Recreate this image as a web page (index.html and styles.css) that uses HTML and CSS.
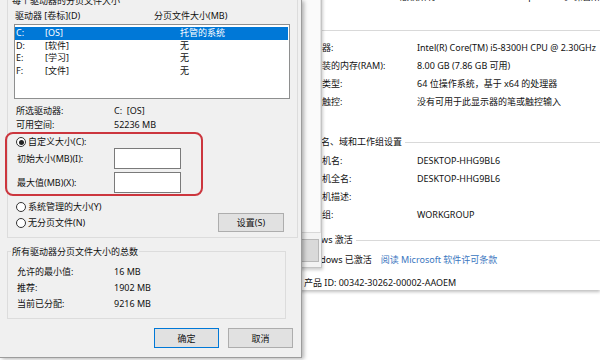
FILE: index.html
```html
<!DOCTYPE html>
<html lang="zh-CN">
<head>
    <meta charset="UTF-8">
    <title>虚拟内存</title>
    <link rel="stylesheet" href="styles.css">
</head>
<body>
<div class="desk">

    <!-- system info window (back) -->
    <div class="syswin">
        <div class="sys-cut">版权所有 © 2019 Microsoft Corporation。保留所有权利。</div>
        <div class="sys-head first">系统</div>
        <div class="sys-rows">
            <div class="sys-row"><span class="sys-k">处理器:</span><span>Intel(R) Core(TM) i5-8300H CPU @ 2.30GHz</span></div>
            <div class="sys-row"><span class="sys-k">已安装的内存(RAM):</span><span>8.00 GB (7.86 GB 可用)</span></div>
            <div class="sys-row"><span class="sys-k">系统类型:</span><span>64 位操作系统，基于 x64 的处理器</span></div>
            <div class="sys-row"><span class="sys-k">笔和触控:</span><span>没有可用于此显示器的笔或触控输入</span></div>
        </div>
        <div class="sys-head second">计算机名、域和工作组设置</div>
        <div class="sys-rows tight">
            <div class="sys-row"><span class="sys-k">计算机名:</span><span>DESKTOP-HHG9BL6</span></div>
            <div class="sys-row"><span class="sys-k">计算机全名:</span><span>DESKTOP-HHG9BL6</span></div>
            <div class="sys-row"><span class="sys-k">计算机描述:</span><span></span></div>
            <div class="sys-row"><span class="sys-k">工作组:</span><span>WORKGROUP</span></div>
        </div>
        <div class="sys-head third">Windows 激活</div>
        <div class="sys-row act">Windows 已激活<a class="sys-link">阅读 Microsoft 软件许可条款</a></div>
        <div class="sys-row pid">产品 ID: 00342-30262-00002-AAOEM</div>
    </div>

    <!-- system properties dialog (middle) -->
    <div class="propwin">
        <div class="prop-page"></div>
        <div class="prop-btn"></div>
    </div>

    <!-- virtual memory dialog (front) -->
    <div class="dialog">
        <div class="grp grp-top">
            <span class="legend">每个驱动器的分页文件大小</span>
            <div class="list-head">
                <span class="lh-drive">驱动器 [卷标](D)</span>
                <span>分页文件大小(MB)</span>
            </div>
            <div class="listbox">
                <div class="lrow selected"><span class="c-drv">C:</span><span class="c-lbl">[OS]</span><span>托管的系统</span></div>
                <div class="lrow"><span class="c-drv">D:</span><span class="c-lbl">[软件]</span><span>无</span></div>
                <div class="lrow"><span class="c-drv">E:</span><span class="c-lbl">[学习]</span><span>无</span></div>
                <div class="lrow"><span class="c-drv">F:</span><span class="c-lbl">[文件]</span><span>无</span></div>
            </div>
            <div class="kv first"><span class="k">所选驱动器:</span><span>C:&nbsp;&nbsp;[OS]</span></div>
            <div class="kv"><span class="k">可用空间:</span><span>52236 MB</span></div>

            <div class="radio-row custom"><span class="radio on"></span>自定义大小(C):</div>
            <div class="field-row"><span class="f-label">初始大小(MB)(I):</span><span class="box-input"></span></div>
            <div class="field-row second"><span class="f-label">最大值(MB)(X):</span><span class="box-input"></span></div>
            <div class="radio-row managed"><span class="radio"></span>系统管理的大小(Y)</div>
            <div class="radio-row last"><span class="radio"></span>无分页文件(N)<span class="btn set-btn">设置(S)</span></div>
        </div>

        <div class="grp grp-bot">
            <span class="legend">所有驱动器分页文件大小的总数</span>
            <div class="kv2"><span class="k">允许的最小值:</span><span>16 MB</span></div>
            <div class="kv2"><span class="k">推荐:</span><span>1902 MB</span></div>
            <div class="kv2"><span class="k">当前已分配:</span><span>9216 MB</span></div>
        </div>

        <div class="btn-row">
            <span class="btn default">确定</span>
            <span class="btn">取消</span>
        </div>
    </div>

    <!-- red annotation -->
    <div class="mark"></div>
</div>
</body>
</html>
```

FILE: styles.css
```css
body {
    margin: 0;
    font-family: "Noto Sans", "Noto Sans CJK SC", sans-serif;
    font-size: 9px;
    color: #111;
}
.desk {
    position: relative;
    width: 600px;
    height: 360px;
    overflow: hidden;
    background: #fff;
}

/* back window */
.syswin {
    position: absolute;
    left: 200px;
    top: 0;
    width: 400px;
    height: 290px;
    box-sizing: border-box;
    padding-left: 94px;
    background: #fff;
    box-shadow: 0 2px 3px rgba(0, 0, 0, 0.25);
    z-index: 1;
}
.sys-cut {
    margin-top: -9px;
    padding-left: 106px;
    line-height: 12px;
    white-space: nowrap;
}
.sys-head {
    display: flex;
    align-items: center;
    line-height: 14px;
    white-space: nowrap;
}
.sys-head::after {
    content: "";
    flex: 1;
    border-top: 1px solid #d9d9d9;
    margin-left: 3px;
}
.sys-head.first { margin-top: 20px; }
.sys-head.second { margin-top: 24px; }
.sys-head.third { margin-top: 9px; }
.sys-rows { margin-top: 2px; }
.sys-rows.tight { margin-top: 3px; }
.sys-row {
    display: flex;
    padding-left: 10px;
    line-height: 18px;
    white-space: nowrap;
}
.sys-k { width: 113px; flex: none; }
.sys-row.act { margin-top: 4px; }
.sys-row.pid { margin-top: 5px; }
.sys-link {
    color: #3a76c0;
    margin-left: 9px;
}

/* middle window */
.propwin {
    position: absolute;
    left: 240px;
    top: -10px;
    width: 82px;
    height: 278px;
    box-sizing: border-box;
    background: #f3f3f3;
    border-right: 1px solid #c4c4c4;
    border-bottom: 1px solid #c4c4c4;
    box-shadow: 1px 2px 3px rgba(0, 0, 0, 0.2);
    z-index: 2;
}
.prop-page {
    height: 243px;
    box-sizing: border-box;
    background: #fafafa;
    border-bottom: 1px solid #d8d8d8;
    border-right: 1px solid #e2e2e2;
}
.prop-btn {
    width: 70px;
    height: 23px;
    margin: 6px 2px 0 auto;
    box-sizing: border-box;
    background: #d9d9d9;
    border: 1px solid #b8b8b8;
}

/* front dialog */
.dialog {
    position: absolute;
    left: 0;
    top: 0;
    width: 302px;
    height: 358px;
    box-sizing: border-box;
    padding-left: 7px;
    background: #f0f0f0;
    border-right: 1px solid #9c9c9c;
    border-bottom: 1px solid #9c9c9c;
    box-shadow: 2px 1px 4px rgba(0, 0, 0, 0.3);
    z-index: 3;
}
.grp {
    position: relative;
    box-sizing: border-box;
    border: 1px solid #dcdcdc;
}
.legend {
    position: absolute;
    left: 3px;
    padding: 0 1px;
    line-height: 12px;
    background: #f0f0f0;
    white-space: nowrap;
}
.grp-top {
    margin-top: -4px;
    width: 291px;
    height: 242px;
}
.grp-top .legend { top: -2px; }
.list-head {
    display: flex;
    margin-top: 13px;
    padding-left: 7px;
    line-height: 12px;
}
.lh-drive { width: 139px; }
.listbox {
    margin: 2px 0 0 6px;
    width: 276px;
    height: 75px;
    box-sizing: border-box;
    padding: 2px 1px 0 0;
    border: 1px solid #8e8f8f;
    background: #fff;
}
.lrow {
    display: flex;
    height: 12.5px;
    line-height: 12.5px;
    padding-left: 1px;
}
.lrow.selected {
    background: #0078d7;
    color: #fff;
}
.c-drv { width: 29px; }
.c-lbl { width: 135px; }

.kv {
    display: flex;
    padding-left: 8px;
    line-height: 14px;
}
.kv.first { margin-top: 5px; }
.kv .k { width: 98px; }

.radio-row {
    display: flex;
    align-items: center;
    padding-left: 8px;
    line-height: 12px;
}
.radio-row.custom { margin-top: 4px; }
.radio-row.managed { margin-top: 8px; }
.radio-row.last { height: 19px; }
.radio {
    position: relative;
    width: 10px;
    height: 10px;
    box-sizing: border-box;
    margin-right: 2px;
    border: 1px solid #333;
    border-radius: 50%;
    background: #fff;
}
.radio.on::after {
    content: "";
    position: absolute;
    left: 1.5px;
    top: 1.5px;
    width: 5px;
    height: 5px;
    border-radius: 50%;
    background: #222;
}
.field-row {
    display: flex;
    align-items: center;
    height: 21px;
    padding-left: 9px;
}
.field-row.second { margin-top: 3px; }
.f-label { width: 97px; }
.box-input {
    width: 67px;
    height: 21px;
    box-sizing: border-box;
    border: 1px solid #7a7a7a;
    background: #fff;
}

.btn {
    display: flex;
    align-items: center;
    justify-content: center;
    width: 65px;
    height: 20px;
    box-sizing: border-box;
    background: #e1e1e1;
    border: 1px solid #adadad;
}
.btn.default { border-color: #0078d7; }
.set-btn {
    width: 66px;
    height: 19px;
    margin-left: auto;
    margin-right: 13px;
}

.grp-bot {
    margin-top: 13px;
    width: 279px;
    height: 68px;
    padding-top: 12px;
}
.grp-bot .legend { top: -6px; }
.kv2 {
    display: flex;
    padding-left: 9px;
    line-height: 16px;
}
.kv2 .k { width: 97px; }

.btn-row {
    display: flex;
    justify-content: flex-end;
    gap: 9px;
    margin-top: 9px;
    padding-right: 8px;
}

/* red annotation box */
.mark {
    position: absolute;
    left: 5px;
    top: 132px;
    width: 198px;
    height: 64px;
    box-sizing: border-box;
    border: 2px solid #cc363e;
    border-radius: 8px;
    z-index: 4;
}
```
